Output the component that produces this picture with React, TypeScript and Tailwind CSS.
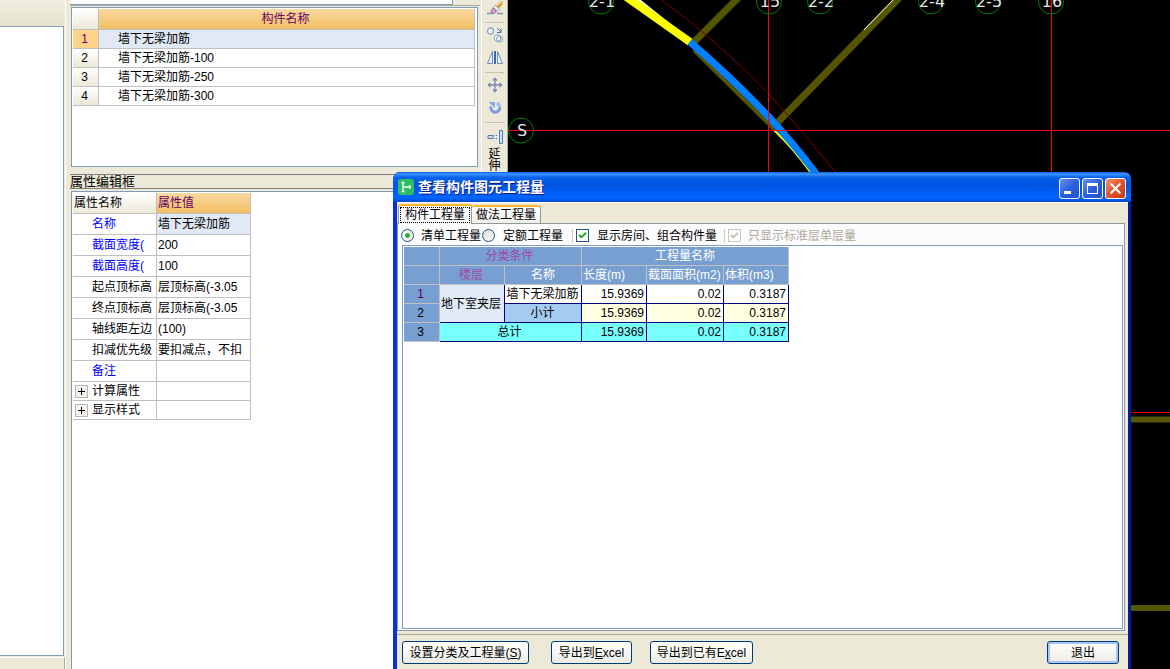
import type { ReactNode } from "react";
import { Check, X } from "lucide-react";

/* ── Data ── */
const COMPONENTS = ["墙下无梁加筋", "墙下无梁加筋-100", "墙下无梁加筋-250", "墙下无梁加筋-300"];

const PROPS = [
  { name: "名称", value: "墙下无梁加筋", blue: true, active: true },
  { name: "截面宽度(", value: "200", blue: true },
  { name: "截面高度(", value: "100", blue: true },
  { name: "起点顶标高", value: "层顶标高(-3.05" },
  { name: "终点顶标高", value: "层顶标高(-3.05" },
  { name: "轴线距左边", value: "(100)" },
  { name: "扣减优先级", value: "要扣减点，不扣" },
  { name: "备注", value: "", blue: true },
];

const GROUPS = ["计算属性", "显示样式"];

const AXES = [
  { x: 601, label: "2-1" },
  { x: 769, label: "15" },
  { x: 820, label: "2-2" },
  { x: 931, label: "2-4" },
  { x: 988, label: "2-5" },
  { x: 1051, label: "16" },
];

/* ── Toolbar icons ── */
function EraserIcon() {
  return (
    <svg width="16" height="16" viewBox="0 0 16 16" fill="none">
      <path d="M0 13.500h6M10 13.500h6" stroke="#7d95bd" strokeWidth="1.500" />
      <path d="M15.500 1v3.500L11.500 9 9 6.500z" fill="#d9a441" />
      <path d="M14 0L8.500 6" stroke="#f0d9a0" />
      <path d="M8.500 5.500l4 3.500-2 2-4-3.500z" fill="#f4f6fa" stroke="#8f9dbb" />
      <path d="M6 8l3.500 3-2 2.500H4.500L4 11z" fill="#e08cc0" stroke="#8c87a8" />
    </svg>
  );
}

function CopyIcon() {
  return (
    <svg width="16" height="16" viewBox="0 0 16 16" fill="none" stroke="#8aa0c4">
      <circle cx="3.500" cy="4" r="3" fill="#f5f8fd" strokeWidth="1.300" />
      <circle cx="10.500" cy="11" r="3.300" fill="#f5f8fd" />
      <circle cx="12.500" cy="12" r="3" />
      <path d="M10 1l4 4M14 1.500v4h-4" stroke="#4a74b0" />
    </svg>
  );
}

function MirrorIcon() {
  return (
    <svg width="16" height="16" viewBox="0 0 16 16" fill="none" stroke="#6f8fc0">
      <path d="M5.500 1.500v12h-5zM10.500 1.500v12h5z" fill="#e8f0fb" />
      <path d="M8 1v13" stroke="#3f6aa8" strokeWidth="2" />
    </svg>
  );
}

function MoveIcon() {
  return (
    <svg width="16" height="16" viewBox="0 0 16 16" fill="none" stroke="#7189b3" strokeWidth="1.300">
      <path d="M8 1v14M1 8h14" />
      <path d="M6 3.500L8 1.500l2 2M6 12.500l2 2 2-2M3.500 6l-2 2 2 2M12.500 6l2 2-2 2" />
    </svg>
  );
}

function RotateIcon() {
  return (
    <svg width="16" height="16" viewBox="0 0 16 16" fill="none">
      <path d="M10 3.500a4.500 4.500 0 1 1-6 3" stroke="#7b9ada" strokeWidth="3" />
      <path d="M10 3.500a4.500 4.500 0 0 1 2.500 4" stroke="#a9c0f0" strokeWidth="3" />
      <path d="M1.500 2H8v6z" fill="#8fabe4" />
    </svg>
  );
}

function ExtendIcon() {
  return (
    <svg width="16" height="16" viewBox="0 0 16 16" fill="none" stroke="#4f79b3">
      <path d="M1 6.500h5v3H1z" fill="#cfe0f5" />
      <path d="M7 6.500h4M7 9.500h4" strokeDasharray="1 1" />
      <path d="M12.500 1.500h3v13h-3z" fill="#cfe0f5" />
    </svg>
  );
}

function ToolButton({ label, children }: { label: string; children: ReactNode }) {
  return (
    <button aria-label={label} className="flex h-[23px] w-full items-center justify-center">
      {children}
    </button>
  );
}

/* ── CAD canvas ── */
function Canvas() {
  return (
    <div className="min-w-0 flex-1 overflow-hidden bg-black">
      <svg className="h-full w-full" fill="none">
        <g transform="translate(-508 0)">
          {/* walls */}
          <g stroke="#555500" strokeWidth="7">
            <path d="M739 -3L693 43" />
            <path d="M900 -3L778 122" />
            <path d="M694 50L774 129" strokeWidth="4" />
            <path d="M1100 419.500H2000M1100 608H2000" strokeWidth="6" />
          </g>
          <path d="M896 -3L864 30" stroke="#fff" />
          <path d="M636 -2L687 39" stroke="#fff" strokeWidth="3" />
          <path d="M625 -4L690 42" stroke="#ff0" strokeWidth="8" />
          <path d="M774 130Q794 149 811 173" stroke="#ff0" strokeWidth="2" />
          <path d="M660 -1Q710 34 768 93Q802 130 836 173" stroke="#800000" />
          <path d="M690 42Q731 77 769 117Q793 143 818 176" stroke="#0080ff" strokeWidth="7" />
          {/* axes */}
          <path d="M768.500 0V200M1051.500 0V200M508 130.500H2000M1100 412.500H2000" stroke="#f00" />
          <g stroke="#008000">
            {AXES.map((a) => (
              <circle key={a.label} cx={a.x} cy="1.500" r="12.500" />
            ))}
            <circle cx="521" cy="130.500" r="12.500" />
          </g>
          <g
            className="font-['DejaVu_Sans'] text-[16px]"
            fill="#e6e6e6"
            textAnchor="middle"
          >
            {AXES.map((a) => (
              <text key={a.label} x={a.x + 1} y="7">
                {a.label}
              </text>
            ))}
            <text x="522" y="136">
              S
            </text>
          </g>
        </g>
      </svg>
    </div>
  );
}

/* ── Component list + property editor ── */
function ComponentList() {
  return (
    <div className="ml-px mt-px h-[160px] w-[407px] border border-[#7f9db9] bg-white p-px">
      <table className="w-[402px] table-fixed border-separate border-spacing-0 leading-[18px]">
        <thead>
          <tr className="h-[21px]">
            <th className="w-[26px] border-b border-r border-[#c0c0c0] bg-linear-to-b from-white to-[#ece9d8] p-0" />
            <th className="border-b border-r border-[#c0c0c0] bg-linear-to-b from-[#fbd9a0] to-[#f2bf60] p-0 pr-[2px] font-normal text-[#660066]">
              构件名称
            </th>
          </tr>
        </thead>
        <tbody>
          {COMPONENTS.map((name, i) => (
            <tr key={name} className="h-[19px]">
              <td
                className={
                  i === 0
                    ? "border-b border-r border-[#c0c0c0] bg-[#ffd38a] p-0 pr-[2px] text-center text-[#660066]"
                    : "border-b border-r border-[#c0c0c0] bg-linear-to-b from-white to-[#ece9d8] p-0 pr-[2px] text-center"
                }
              >
                {i + 1}
              </td>
              <td
                className={
                  i === 0
                    ? "border-b border-r border-[#c0c0c0] bg-[#e0e9f5] p-0 pl-[19px]"
                    : "border-b border-r border-[#c0c0c0] p-0 pl-[19px]"
                }
              >
                {name}
              </td>
            </tr>
          ))}
        </tbody>
      </table>
    </div>
  );
}

function PropertyTable() {
  return (
    <div className="ml-px mt-[2px] flex-1 border-l border-t border-[#7f9db9] bg-white p-px">
      <table className="w-[178px] table-fixed border-separate border-spacing-0 whitespace-nowrap leading-[18px]">
        <thead>
          <tr className="h-[21px] text-left">
            <th className="w-[84px] border-b border-r border-[#c0c0c0] bg-linear-to-b from-white to-[#ece9d8] p-0 pl-px font-normal">
              属性名称
            </th>
            <th className="border-b border-r border-[#c0c0c0] bg-linear-to-b from-[#fbd9a0] to-[#f2bf60] p-0 pl-px font-normal text-[#660066]">
              属性值
            </th>
          </tr>
        </thead>
        <tbody>
          {PROPS.map((p) => (
            <tr key={p.name} className="h-[21px]">
              <td
                className={
                  p.blue
                    ? "border-b border-r border-[#c0c0c0] p-0 pl-[19px] text-[#0000ff]"
                    : "border-b border-r border-[#c0c0c0] p-0 pl-[19px]"
                }
              >
                {p.name}
              </td>
              <td
                className={
                  p.active
                    ? "border-b border-r border-[#c0c0c0] bg-[#e0e9f5] p-0 pl-px"
                    : "border-b border-r border-[#c0c0c0] p-0 pl-px"
                }
              >
                {p.value}
              </td>
            </tr>
          ))}
          {GROUPS.map((g) => (
            <tr key={g} className="h-[19px]">
              <td className="border-b border-r border-[#c0c0c0] p-0">
                <div className="flex items-center gap-[4px] pl-[2px]">
                  <button
                    aria-label={`展开${g}`}
                    className="flex size-[13px] items-center justify-center border border-[#b8b8b8] bg-[#f2f1ec]"
                  >
                    <svg width="7" height="7" stroke="#000">
                      <path d="M0 3.500h7M3.500 0v7" />
                    </svg>
                  </button>
                  {g}
                </div>
              </td>
              <td className="border-b border-r border-[#c0c0c0] p-0" />
            </tr>
          ))}
        </tbody>
      </table>
    </div>
  );
}

/* ── Dialog ── */
const HEAD = "border-b border-r border-[#c0c0c0] bg-[#779fd1] p-0 font-normal";
const CELL = "border-b border-r border-[#000080] p-0";

function QuantityTable() {
  return (
    <table className="w-[385px] table-fixed border-separate border-spacing-0 whitespace-nowrap leading-[18px]">
      <colgroup>
        <col className="w-[36px]" />
        <col className="w-[65px]" />
        <col className="w-[77px]" />
        <col className="w-[65px]" />
        <col className="w-[77px]" />
        <col className="w-[65px]" />
      </colgroup>
      <thead className="text-white">
        <tr className="h-[19px]">
          <th className={HEAD} />
          <th colSpan={2} className={`${HEAD} pr-[2px] text-[#a04aa5]`}>
            分类条件
          </th>
          <th colSpan={3} className={HEAD}>
            工程量名称
          </th>
        </tr>
        <tr className="h-[19px]">
          <th className={HEAD} />
          <th className={`${HEAD} pr-[2px] text-[#a04aa5]`}>楼层</th>
          <th className={HEAD}>名称</th>
          <th className={`${HEAD} pl-px text-left`}>长度(m)</th>
          <th className={`${HEAD} pl-px text-left`}>截面面积(m2)</th>
          <th className={`${HEAD} pl-px text-left`}>体积(m3)</th>
        </tr>
      </thead>
      <tbody className="text-right">
        <tr className="h-[19px]">
          <td className={`${HEAD} pr-[2px] text-center text-[#660066]`}>1</td>
          <td rowSpan={2} className={`${CELL} bg-[#e0e9f5] pr-[2px] text-center`}>
            地下室夹层
          </td>
          <td className={`${CELL} pr-px text-center`}>墙下无梁加筋</td>
          <td className={`${CELL} pr-[2px]`}>15.9369</td>
          <td className={`${CELL} pr-[2px]`}>0.02</td>
          <td className={`${CELL} pr-[2px]`}>0.3187</td>
        </tr>
        <tr className="h-[19px] bg-[#ffffe1]">
          <td className={`${HEAD} pr-[2px] text-center`}>2</td>
          <td className={`${CELL} bg-[#a6cbf0] pr-px text-center`}>小计</td>
          <td className={`${CELL} pr-[2px]`}>15.9369</td>
          <td className={`${CELL} pr-[2px]`}>0.02</td>
          <td className={`${CELL} pr-[2px]`}>0.3187</td>
        </tr>
        <tr className="h-[19px] bg-[#78ffff]">
          <td className={`${HEAD} pr-[2px] text-center`}>3</td>
          <td colSpan={2} className={`${CELL} pr-[2px] text-center`}>
            总计
          </td>
          <td className={`${CELL} pr-[2px]`}>15.9369</td>
          <td className={`${CELL} pr-[2px]`}>0.02</td>
          <td className={`${CELL} pr-[2px]`}>0.3187</td>
        </tr>
      </tbody>
    </table>
  );
}

const RADIO =
  "size-[13px] appearance-none rounded-full border border-[#1c5180] bg-linear-to-br from-[#dcdcd7] to-white checked:bg-[radial-gradient(circle,#21a121_0,#38b838_2px,#f6f6f4_3px)]";
const BUTTON =
  "h-[23px] rounded-[3px] border border-[#003c74] bg-linear-to-b from-white to-[#ecebe5] text-center";

function Dialog() {
  return (
    <section
      role="dialog"
      aria-label="查看构件图元工程量"
      className="absolute bottom-0 left-[393px] right-[39px] top-[172px] flex flex-col rounded-t-[7px] bg-linear-to-r from-[#0831d9] via-[#0855ee] to-[#001ea0]"
    >
      {/* title bar */}
      <header className="flex h-[30px] shrink-0 items-center gap-[4px] rounded-t-[7px] bg-[linear-gradient(#0058d8_0%,#3c95ff_6%,#0863ea_18%,#0054e3_40%,#005bf0_65%,#0066ff_86%,#0048d0_100%)] pl-[5px] pr-[5px]">
        <svg width="16" height="16" viewBox="0 0 16 16" fill="none">
          <rect width="16" height="16" rx="3" fill="#2fbd63" />
          <path d="M5 3v10M3.500 3.500h3M3.500 12.500h3M5 8h7M12 6v4" stroke="#fff" strokeWidth="1.300" />
        </svg>
        <h1 className="flex-1 text-[14px] font-bold leading-[20px] text-white [text-shadow:1px_1px_#0a1883]">
          查看构件图元工程量
        </h1>
        <div className="flex gap-[2px] pt-[3px]">
          <button
            aria-label="最小化"
            className="flex size-[21px] rounded-[3px] border border-white bg-linear-to-br from-[#6a93f0] via-[#2a5fe0] to-[#2350c8] pl-[4px] pt-[12px]"
          >
            <span className="h-[3px] w-[7px] bg-white" />
          </button>
          <button
            aria-label="最大化"
            className="flex size-[21px] items-center justify-center rounded-[3px] border border-white bg-linear-to-br from-[#6a93f0] via-[#2a5fe0] to-[#2350c8]"
          >
            <span className="size-[11px] border border-t-[3px] border-white" />
          </button>
          <button
            aria-label="关闭"
            className="flex size-[21px] items-center justify-center rounded-[3px] border border-white bg-linear-to-br from-[#f0906c] via-[#e0532a] to-[#c33c14] text-white"
          >
            <X size={17} strokeWidth={3} />
          </button>
        </div>
      </header>

      <div className="ml-[4px] mr-[3px] flex flex-1 flex-col border-t border-white bg-[#ece9d8]">
        <div role="tablist" className="flex h-[20px] shrink-0 items-end pl-px">
          <button
            role="tab"
            aria-selected="true"
            className="relative z-10 -mb-px h-[20px] w-[74px] rounded-t-[3px] border-x border-t-[2px] border-x-[#919b9c] border-t-[#ffb52e] bg-[#fcfcfe] p-px"
          >
            <span className="block h-[16px] border border-dotted border-black leading-[14px]">构件工程量</span>
          </button>
          <button
            role="tab"
            aria-selected="false"
            className="h-[18px] w-[69px] rounded-t-[3px] border-r border-t-[2px] border-r-[#919b9c] border-t-[#ffb52e] bg-linear-to-b from-white to-[#f0f0ea] leading-[16px]"
          >
            做法工程量
          </button>
        </div>

        <div className="mr-[3px] flex flex-1 flex-col border border-[#919b9c] bg-[#fcfcfe] pb-px">
          <div className="flex h-[21px] shrink-0 items-center whitespace-nowrap pl-[3px] pt-[2px] leading-[16px]">
            <input id="bill" type="radio" name="mode" defaultChecked className={RADIO} />
            <label htmlFor="bill" className="ml-[7px]">
              清单工程量
            </label>
            <input id="quota" type="radio" name="mode" className={`${RADIO} ml-px`} />
            <label htmlFor="quota" className="ml-[8px]">
              定额工程量
            </label>
            <span className="ml-[9px] h-[14px] w-px bg-[#d0cbb0]" />
            <span className="relative ml-[3px] size-[13px]">
              <input
                id="rooms"
                type="checkbox"
                defaultChecked
                className="block size-[13px] appearance-none border border-[#1c5180] bg-white"
              />
              <Check className="pointer-events-none absolute left-[2px] top-[2px] text-[#21a121]" size={9} strokeWidth={5} />
            </span>
            <label htmlFor="rooms" className="ml-[8px]">
              显示房间、组合构件量
            </label>
            <span className="ml-[7px] h-[14px] w-px bg-[#d0cbb0]" />
            <span className="relative ml-[3px] size-[13px]">
              <input
                id="standard"
                type="checkbox"
                defaultChecked
                disabled
                className="block size-[13px] appearance-none border border-[#cac8bb] bg-white"
              />
              <Check className="pointer-events-none absolute left-[2px] top-[2px] text-[#c4c2b5]" size={9} strokeWidth={5} />
            </span>
            <label htmlFor="standard" className="ml-[7px] text-[#aca899]">
              只显示标准层单层量
            </label>
          </div>
          <div className="ml-[4px] mr-px flex-1 border border-[#7f9db9] bg-white p-px">
            <QuantityTable />
          </div>
        </div>

        <footer className="mt-[3px] flex h-[35px] shrink-0 border-t border-[#aca899] pl-[5px] pr-[9px] pt-[6px]">
          <button className={`${BUTTON} w-[127px]`}>
            设置分类及工程量(<u>S</u>)
          </button>
          <button className={`${BUTTON} ml-[22px] w-[81px]`}>
            导出到<u>E</u>xcel
          </button>
          <button className={`${BUTTON} ml-[18px] w-[103px]`}>
            导出到已有E<u>x</u>cel
          </button>
          <button className={`${BUTTON} ml-auto w-[72px] shadow-[inset_0_0_0_2px_#a9c4f5]`}>退出</button>
        </footer>
      </div>
    </section>
  );
}

export default function App() {
  return (
    <div className="relative flex h-screen overflow-hidden bg-[#ece9d8] font-['Liberation_Sans','Noto_Sans_CJK_SC',sans-serif] text-[12px] text-black">
      {/* left pane */}
      <aside className="flex w-[66px] shrink-0 flex-col border-r border-white">
        <div className="h-[26px] bg-linear-to-b from-[#f0efe2] to-[#e6e2cc]" />
        <div className="mr-px flex-1 border-y border-r border-[#7f9db9] bg-white" />
        <div className="mt-px h-[12px] border-r border-t border-r-[#aca899] border-t-white" />
      </aside>

      {/* middle column */}
      <main className="ml-[4px] flex w-[410px] shrink-0 flex-col">
        <div className="h-[6px] border-b border-[#aca899]">
          <div className="h-[5px] w-[383px] border-b border-r border-[#7f9db9] bg-white" />
        </div>
        <ComponentList />
        <h2 className="mt-[7px] h-[15px] border-y border-[#808080] text-[13px] leading-[13px]">属性编辑框</h2>
        <PropertyTable />
      </main>

      {/* drawing tools */}
      <nav className="ml-px flex w-[27px] shrink-0 flex-col border-l border-r border-l-white border-r-[#aca899] pl-[3px] pr-[3px]">
        <div className="border-b border-[#c5c2b0] pb-[3px]">
          <button aria-label="删除" className="flex h-[19px] w-full justify-center">
            <EraserIcon />
          </button>
        </div>
        <div className="border-b border-[#c5c2b0] pb-[3px]">
          <ToolButton label="复制">
            <CopyIcon />
          </ToolButton>
          <ToolButton label="镜像">
            <MirrorIcon />
          </ToolButton>
        </div>
        <div className="border-b border-[#c5c2b0] pb-[3px]">
          <ToolButton label="移动">
            <MoveIcon />
          </ToolButton>
          <ToolButton label="旋转">
            <RotateIcon />
          </ToolButton>
        </div>
        <button className="flex flex-col items-center gap-[3px] pt-[6px] leading-[12px]">
          <ExtendIcon />
          <span className="w-[12px]">延伸</span>
        </button>
      </nav>

      <Canvas />
      <Dialog />
    </div>
  );
}
